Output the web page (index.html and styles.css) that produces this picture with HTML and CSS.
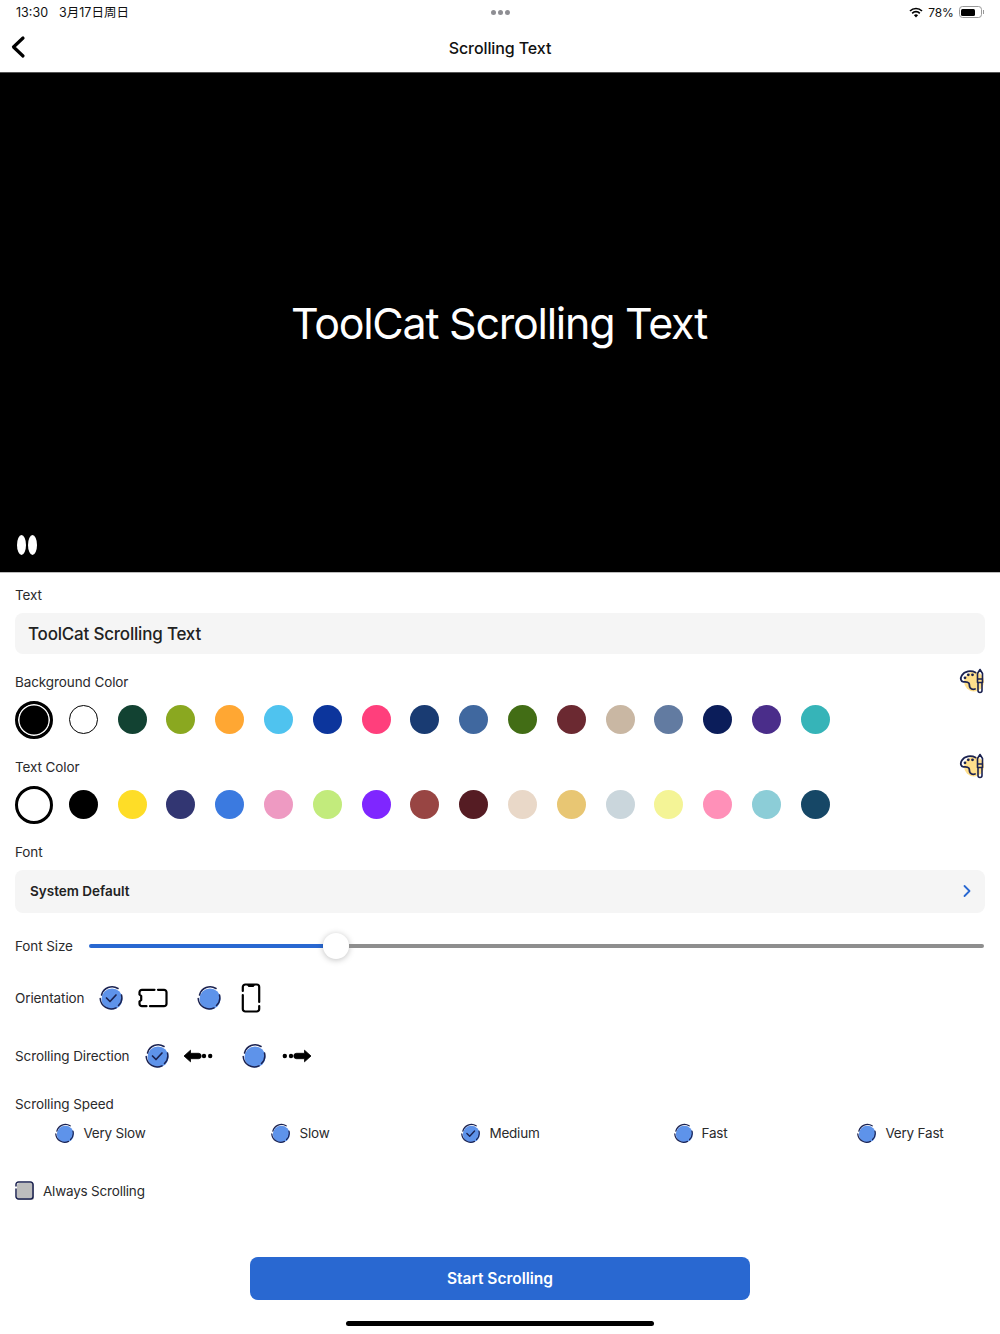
FILE: index.html
```html
<!DOCTYPE html>
<html lang="en">
<head>
    <meta charset="UTF-8">
    <meta name="viewport" content="width=device-width, initial-scale=1.0">
    <title>Scrolling Text</title>
    <link rel="stylesheet" href="styles.css">
</head>
<body>
    <svg class="sprites" width="0" height="0">
        <symbol id="palette" viewBox="0 0 26 26">
            <circle cx="15" cy="13.500" r="10" fill="#ffdf8c"/>
            <path d="M16.500 4.500 C12 2 5.500 3 2.800 7.500 C1 10.500 1.800 13.500 4.500 13.800 C7 14 8.500 13.500 9.800 15 C11 16.500 9.800 18 11.200 19.800 C12.500 21.300 14.500 21.500 16 21" fill="none" stroke="#1b2250" stroke-width="1.800" stroke-linecap="round"/>
            <circle cx="6" cy="9.800" r="1.400" fill="#1b2250"/>
            <circle cx="9.300" cy="6.800" r="1.400" fill="#1b2250"/>
            <circle cx="13.500" cy="6.800" r="1.400" fill="#1b2250"/>
            <path d="M18.500 11 V5.500 L21 1.500 L23.500 5.500 V11z M18.500 11 h5 V14.500 h-5z M19 14.500 V22.500 a2 2 0 0 0 4 0 V14.500" fill="none" stroke="#1b2250" stroke-width="1.600" stroke-linejoin="round"/>
        </symbol>
        <symbol id="radio" viewBox="0 0 26 26">
            <circle cx="14" cy="14" r="10.500" fill="#5e93ea"/>
            <path d="M20 3.500 A11 11 0 0 0 3.500 10 M2.200 13.500 A11 11 0 0 0 18 22.800 M20.500 20.500 A11 11 0 0 0 23.500 10" fill="none" stroke="#1b2250" stroke-width="1.500" stroke-linecap="round"/>
        </symbol>
        <symbol id="radio-on" viewBox="0 0 26 26">
            <use href="#radio"/>
            <path d="M8.500 13 L12 16.500 L18 10" fill="none" stroke="#1b2250" stroke-width="1.700" stroke-linecap="round" stroke-linejoin="round"/>
        </symbol>
    </svg>

    <div class="status-bar">
        <div class="status-left"><span>13:30</span><span>3月17日周日</span></div>
        <div class="status-dots"><i></i><i></i><i></i></div>
        <div class="status-right">
            <svg width="14" height="11" viewBox="0 0 14 11"><path d="M1 4 A8.500 8.500 0 0 1 13 4 M3.200 6.300 A5.300 5.300 0 0 1 10.800 6.300" fill="none" stroke="#000" stroke-width="1.700"/><path d="M4.900 8.200 A3 3 0 0 1 9.100 8.200 L7 10.600z" fill="#000"/></svg>
            <span>78%</span>
            <div class="battery"><div class="battery-fill"></div></div>
            <div class="battery-cap"></div>
        </div>
    </div>

    <header class="nav-bar">
        <svg class="back-icon" width="16" height="24" viewBox="0 0 16 24"><path d="M13 3 L3.500 12 L13 21" fill="none" stroke="#000" stroke-width="3.200" stroke-linecap="round" stroke-linejoin="round"/></svg>
        <h1>Scrolling Text</h1>
    </header>

    <section class="stage">
        <p class="stage-text">ToolCat Scrolling Text</p>
        <div class="pause"><i></i><i></i></div>
    </section>

    <main class="form">
        <label class="field-label label-text">Text</label>
        <div class="text-input">ToolCat Scrolling Text</div>

        <div class="color-head head-bg">
            <span class="field-label">Background Color</span>
            <svg class="palette" width="26" height="26"><use href="#palette"/></svg>
        </div>
        <div class="swatches">
            <span class="swatch selected inverse" style="background:#000"></span>
            <span class="swatch outlined" style="background:#fff"></span>
            <span class="swatch" style="background:#124232"></span>
            <span class="swatch" style="background:#8aa820"></span>
            <span class="swatch" style="background:#ffa733"></span>
            <span class="swatch" style="background:#4fc3ef"></span>
            <span class="swatch" style="background:#0c359c"></span>
            <span class="swatch" style="background:#ff3f7c"></span>
            <span class="swatch" style="background:#193b72"></span>
            <span class="swatch" style="background:#40689f"></span>
            <span class="swatch" style="background:#426d15"></span>
            <span class="swatch" style="background:#6b2931"></span>
            <span class="swatch" style="background:#c9b7a3"></span>
            <span class="swatch" style="background:#627ba1"></span>
            <span class="swatch" style="background:#0b1d5a"></span>
            <span class="swatch" style="background:#4a2d8a"></span>
            <span class="swatch" style="background:#36b4b8"></span>
        </div>

        <div class="color-head head-text">
            <span class="field-label">Text Color</span>
            <svg class="palette" width="26" height="26"><use href="#palette"/></svg>
        </div>
        <div class="swatches">
            <span class="swatch selected" style="background:#fff"></span>
            <span class="swatch" style="background:#000"></span>
            <span class="swatch" style="background:#fedd27"></span>
            <span class="swatch" style="background:#323672"></span>
            <span class="swatch" style="background:#3b7ae0"></span>
            <span class="swatch" style="background:#ee9ac2"></span>
            <span class="swatch" style="background:#c2eb7c"></span>
            <span class="swatch" style="background:#7f26ff"></span>
            <span class="swatch" style="background:#984543"></span>
            <span class="swatch" style="background:#551c23"></span>
            <span class="swatch" style="background:#e9d8c8"></span>
            <span class="swatch" style="background:#e8c673"></span>
            <span class="swatch" style="background:#cad6dc"></span>
            <span class="swatch" style="background:#f4f496"></span>
            <span class="swatch" style="background:#ff90b8"></span>
            <span class="swatch" style="background:#8ccdd7"></span>
            <span class="swatch" style="background:#164766"></span>
        </div>

        <label class="field-label label-font">Font</label>
        <div class="select">
            <span>System Default</span>
            <svg width="10" height="14" viewBox="0 0 10 14"><path d="M2.500 2 L7.500 7 L2.500 12" fill="none" stroke="#2968d1" stroke-width="1.800" stroke-linecap="round" stroke-linejoin="round"/></svg>
        </div>

        <div class="size-row">
            <span class="field-label">Font Size</span>
            <div class="slider">
                <div class="slider-done"></div>
                <div class="slider-thumb"></div>
                <div class="slider-rest"></div>
            </div>
        </div>

        <div class="option-row orient-row">
            <span class="field-label">Orientation</span>
            <svg class="radio r-first" width="26" height="26"><use href="#radio-on"/></svg>
            <svg class="glyph" width="30" height="20" viewBox="0 0 30 20"><path d="M20 1.800 H26 a2.500 2.500 0 0 1 2.500 2.500 V15.700 a2.500 2.500 0 0 1 -2.500 2.500 H12 M8.500 18.200 H4 a2.500 2.500 0 0 1 -2.500 -2.500 V13.500 L3.200 12 V8 L1.500 6.500 V4.300 a2.500 2.500 0 0 1 2.500 -2.500 H16.500" fill="none" stroke="#000" stroke-width="2.200" stroke-linecap="round" stroke-linejoin="round"/></svg>
            <svg class="radio r-second" width="26" height="26"><use href="#radio"/></svg>
            <svg class="glyph" width="20" height="30" viewBox="0 0 20 30"><path d="M1.800 8 V4 a2.500 2.500 0 0 1 2.500 -2.500 H15.700 a2.500 2.500 0 0 1 2.500 2.500 V19 M18.200 23 V26 a2.500 2.500 0 0 1 -2.500 2.500 H4.300 a2.500 2.500 0 0 1 -2.500 -2.500 V12" fill="none" stroke="#000" stroke-width="2.200" stroke-linecap="round" stroke-linejoin="round"/><path d="M6 2 L7.500 4 H12.500 L14 2" fill="#000"/></svg>
        </div>

        <div class="option-row dir-row">
            <span class="field-label">Scrolling Direction</span>
            <svg class="radio r-first" width="26" height="26"><use href="#radio-on"/></svg>
            <svg class="glyph" width="30" height="14" viewBox="0 0 30 14"><path d="M1 7 L7.500 1.200 V4.300 H15.500 a2.700 2.700 0 0 1 0 5.400 H7.500 V12.800z" fill="#000" stroke="#000" stroke-width="0.800" stroke-linejoin="round"/><circle cx="21" cy="7" r="2.200" fill="#000"/><circle cx="27.200" cy="7" r="2.200" fill="#000"/></svg>
            <svg class="radio r-second" width="26" height="26"><use href="#radio"/></svg>
            <svg class="glyph" width="30" height="14" viewBox="0 0 30 14"><path d="M29 7 L22.500 1.200 V4.300 H14.500 a2.700 2.700 0 0 0 0 5.400 H22.500 V12.800z" fill="#000" stroke="#000" stroke-width="0.800" stroke-linejoin="round"/><circle cx="9" cy="7" r="2.200" fill="#000"/><circle cx="2.800" cy="7" r="2.200" fill="#000"/></svg>
        </div>

        <div class="field-label label-speed">Scrolling Speed</div>
        <div class="speed-row">
            <div class="speed"><svg width="21" height="21"><use href="#radio"/></svg><span>Very Slow</span></div>
            <div class="speed"><svg width="21" height="21"><use href="#radio"/></svg><span>Slow</span></div>
            <div class="speed"><svg width="21" height="21"><use href="#radio-on"/></svg><span>Medium</span></div>
            <div class="speed"><svg width="21" height="21"><use href="#radio"/></svg><span>Fast</span></div>
            <div class="speed"><svg width="21" height="21"><use href="#radio"/></svg><span>Very Fast</span></div>
        </div>

        <div class="always-row">
            <svg width="20" height="20" viewBox="0 0 20 20"><rect x="2" y="2" width="17" height="17" rx="2.500" fill="#bdbdbd"/><path d="M1 5 V3.500 A2.500 2.500 0 0 1 3.500 1 H15.500 A2.500 2.500 0 0 1 18 3.500 V15.500 A2.500 2.500 0 0 1 15.500 18 H3.500 A2.500 2.500 0 0 1 1 15.500 V8" fill="none" stroke="#1b2250" stroke-width="1.500" stroke-linecap="round"/></svg>
            <span class="field-label">Always Scrolling</span>
        </div>

        <button class="start-btn">Start Scrolling</button>
    </main>

    <div class="home-bar"></div>
</body>
</html>
```
FILE: styles.css
```css
* {
    margin: 0;
    padding: 0;
    box-sizing: border-box;
}

body {
    width: 1000px;
    height: 1334px;
    overflow: hidden;
    background: #fff;
    color: #1c1c1e;
    font-family: Inter, "Noto Sans CJK SC", sans-serif;
    position: relative;
}

.sprites {
    position: absolute;
}

.status-bar {
    height: 24px;
    padding: 0 16px;
    display: flex;
    align-items: center;
    justify-content: space-between;
    font-size: 12.500px;
    color: #111;
}

.status-left {
    display: flex;
    align-items: center;
    gap: 11px;
    width: 200px;
    line-height: 16px;
    margin-top: 2px;
}

.status-left span {
    display: block;
    height: 16px;
}

.status-dots {
    display: flex;
    gap: 2px;
}

.status-dots i {
    width: 5px;
    height: 5px;
    border-radius: 50%;
    background: #8e8e93;
}

.status-right {
    width: 200px;
    display: flex;
    align-items: center;
    justify-content: flex-end;
    gap: 5px;
    font-size: 12px;
}

.status-right span {
    letter-spacing: -0.2px;
}

.battery {
    width: 23px;
    height: 12px;
    border: 1px solid #999;
    border-radius: 3.500px;
    padding: 1.500px;
}

.battery-fill {
    width: 78%;
    height: 100%;
    background: #000;
    border-radius: 1.500px;
}

.battery-cap {
    width: 1.500px;
    height: 4px;
    margin-left: -4px;
    background: #999;
}

.nav-bar {
    height: 48px;
    display: flex;
    align-items: center;
    justify-content: center;
    position: relative;
}

.nav-bar h1 {
    font-size: 16px;
    font-weight: 500;
    letter-spacing: -0.1px;
    color: #111;
}

.back-icon {
    position: absolute;
    left: 10px;
    top: 11px;
}

.stage {
    height: 500px;
    background: #000;
    display: flex;
    align-items: center;
    justify-content: center;
    position: relative;
    border-top: 1px solid #555;
    box-shadow: 0 1px 0 #bbb;
}

.stage-text {
    color: #fff;
    font-size: 43px;
    letter-spacing: -1.250px;
    margin-right: 2px;
}

.pause {
    position: absolute;
    left: 17px;
    bottom: 17px;
    display: flex;
    gap: 2px;
}

.pause i {
    width: 9px;
    height: 20px;
    border-radius: 50%;
    background: #fff;
}

.form {
    padding: 0 15px;
}

.field-label {
    display: block;
    font-size: 13.500px;
    letter-spacing: -0.1px;
    line-height: 18px;
    color: #2a2a2c;
}

.label-text {
    padding-top: 14px;
}

.text-input {
    height: 41px;
    margin-top: 9px;
    padding-left: 13px;
    display: flex;
    align-items: center;
    background: #f5f5f5;
    border-radius: 8px;
    font-size: 17px;
    letter-spacing: -0.2px;
    font-weight: 500;
    color: #222;
}

.color-head {
    display: flex;
    justify-content: space-between;
    align-items: flex-start;
    height: 18px;
}

.head-bg {
    margin-top: 19px;
}

.head-text {
    margin-top: 19.500px;
}

.palette {
    margin-top: -5px;
}

.swatches {
    display: flex;
    align-items: center;
    height: 38px;
    margin-top: 9.500px;
    gap: 19.800px;
}

.swatch {
    width: 29px;
    height: 29px;
    border-radius: 50%;
    flex: none;
}

.swatch.outlined {
    border: 1.500px solid #000;
}

.swatch.selected {
    width: 38px;
    height: 38px;
    margin-right: -4px;
    border: 3px solid #000;
}

.swatch.inverse {
    box-shadow: inset 0 0 0 1.500px #fff;
}

.label-font {
    margin-top: 19px;
}

.select {
    height: 43px;
    margin-top: 9px;
    padding: 0 13px 0 15px;
    display: flex;
    align-items: center;
    justify-content: space-between;
    background: #f5f5f5;
    border-radius: 8px;
    font-size: 13.500px;
    font-weight: 600;
    color: #222;
}

.size-row {
    display: flex;
    align-items: center;
    height: 26px;
    margin-top: 20px;
}

.slider {
    margin-left: 16px;
    flex: 1;
    display: flex;
    align-items: center;
    margin-right: 1px;
}

.slider-done {
    width: 234px;
    height: 4px;
    background: #2968d1;
    border-radius: 2px 0 0 2px;
}

.slider-thumb {
    width: 26px;
    height: 26px;
    border-radius: 50%;
    background: #fff;
    box-shadow: 0 1px 6px rgba(0, 0, 0, 0.25);
    flex: none;
}

.slider-rest {
    flex: 1;
    height: 4px;
    background: #8e8e8e;
    border-radius: 0 2px 2px 0;
}

.option-row {
    display: flex;
    align-items: center;
    height: 32px;
}

.orient-row {
    margin-top: 23px;
}

.dir-row {
    margin-top: 26px;
}

.r-first {
    margin-left: 14px;
}

.r-second {
    margin-left: 28px;
}

.orient-row .glyph {
    margin-left: 14px;
}

.orient-row svg:last-child {
    margin-left: 19px;
}

.dir-row .glyph {
    margin-left: 13px;
}

.dir-row svg:last-child {
    margin-left: 15px;
}

.label-speed {
    margin-top: 23px;
}

/* five equal columns across the whole screen, not just the padded form */
.speed-row {
    display: grid;
    grid-template-columns: repeat(5, 200px);
    justify-items: center;
    margin: 10px -15px 0;
}

.speed {
    display: flex;
    align-items: center;
    gap: 8px;
    font-size: 13.500px;
    letter-spacing: -0.2px;
    color: #2a2a2c;
}

.always-row {
    display: flex;
    align-items: center;
    gap: 8px;
    margin-top: 37px;
}

.always-row .field-label {
    letter-spacing: -0.2px;
}

.start-btn {
    display: block;
    width: 500px;
    height: 43px;
    margin: 56px auto 0;
    background: #2968d1;
    border: none;
    border-radius: 8px;
    color: #fff;
    font-family: inherit;
    font-size: 15.500px;
    font-weight: 600;
}

.home-bar {
    position: absolute;
    left: 346px;
    bottom: 8px;
    width: 308px;
    height: 5px;
    background: #000;
    border-radius: 3px;
}
```
